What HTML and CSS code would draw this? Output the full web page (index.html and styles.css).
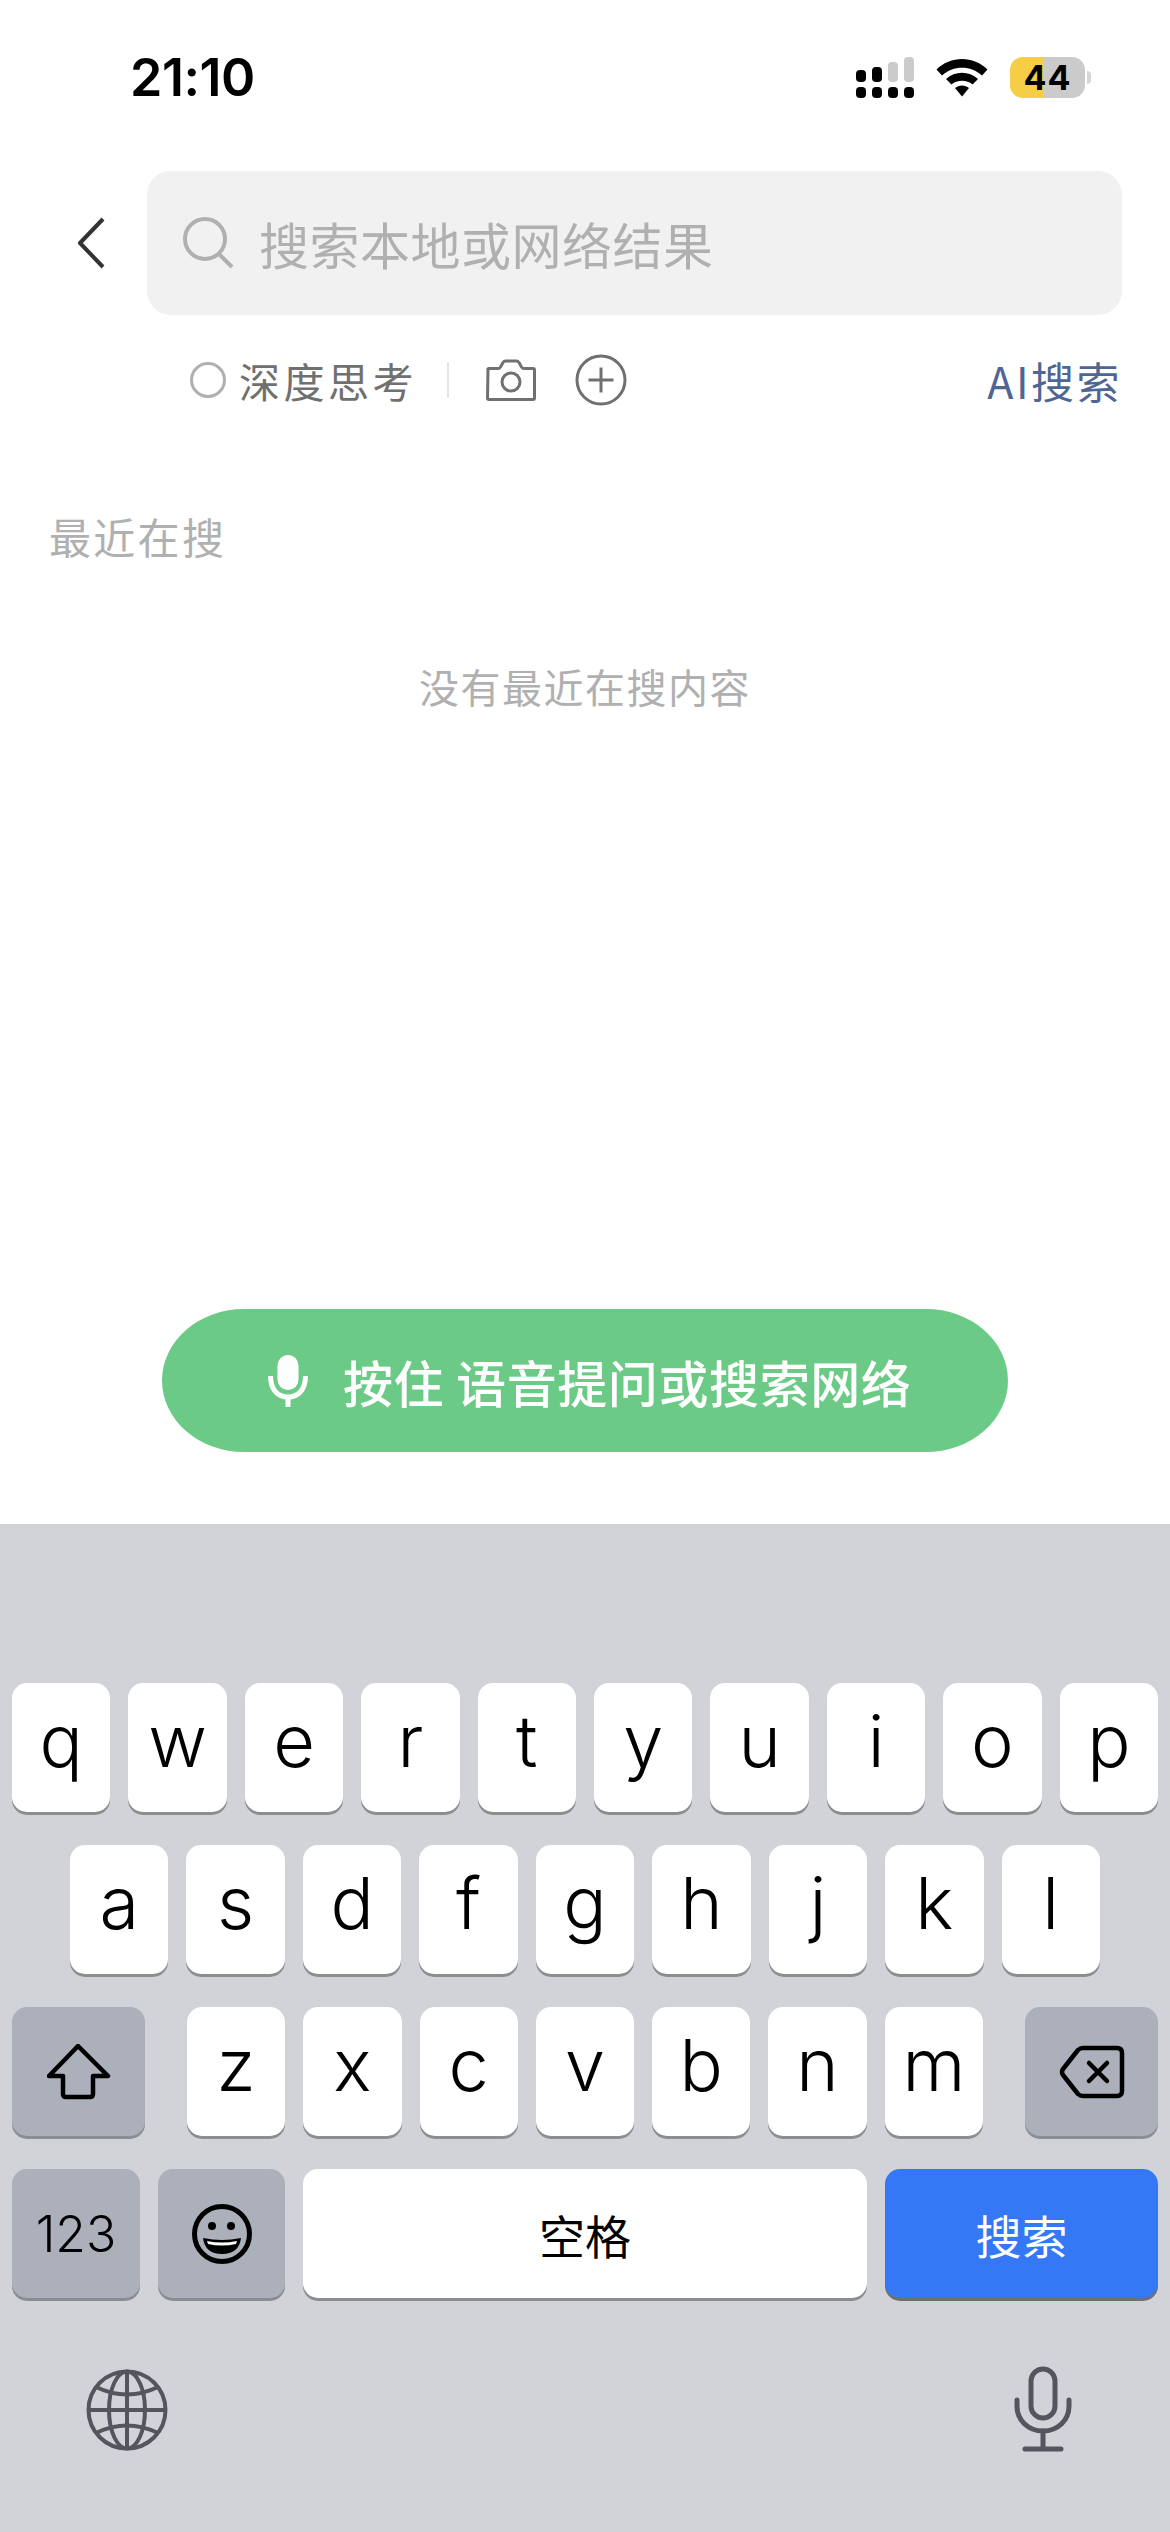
FILE: index.html
```html
<!DOCTYPE html>
<html lang="zh-CN">
<head>
<meta charset="utf-8">
<title>搜索</title>
<link rel="stylesheet" href="styles.css">
</head>
<body>
<div class="page">
  <header class="status">
    <span class="time">21:10</span>
    <div class="status-icons">
      <svg class="signal" width="58" height="42" viewBox="0 0 58 42">
        <rect x="0" y="13" width="10" height="12" rx="4" fill="#000"/>
        <rect x="16" y="10" width="10" height="15" rx="4" fill="#000"/>
        <rect x="32" y="5" width="10" height="20" rx="4" fill="#cbcbcb"/>
        <rect x="48" y="0" width="10" height="25" rx="4" fill="#cbcbcb"/>
        <rect x="0" y="30" width="10" height="11" rx="4" fill="#000"/>
        <rect x="16" y="30" width="10" height="11" rx="4" fill="#000"/>
        <rect x="32" y="30" width="10" height="11" rx="4" fill="#000"/>
        <rect x="48" y="30" width="10" height="11" rx="4" fill="#000"/>
      </svg>
      <svg class="wifi" width="52" height="39" viewBox="0 0 52 39">
        <path d="M0.500 11.500 C14.500 -2.500 37.500 -2.500 51.500 11.500 L46 17.500 C35 7 17 7 6 17.500 Z" fill="#000"/>
        <path d="M10 21 C19 12.500 33 12.500 42 21 L36.500 26.500 C31 21.500 21 21.500 15.500 26.500 Z" fill="#000"/>
        <path d="M19 30 C23 26.500 29 26.500 33 30 L26 38.500 Z" fill="#000"/>
      </svg>
      <div class="battery"><div class="battery-body">44</div><span class="battery-tip"></span></div>
    </div>
  </header>

  <section class="search-row">
    <svg class="back" width="30" height="52" viewBox="0 0 30 52">
      <path d="M27 2 L4 26 L27 50" fill="none" stroke="#333" stroke-width="4" stroke-linejoin="round"/>
    </svg>
    <div class="search-box">
      <svg class="search-icon" width="52" height="52" viewBox="0 0 52 52">
        <circle cx="22" cy="22" r="20" fill="none" stroke="#b0b0b0" stroke-width="4"/>
        <path d="M36 37 L49 50" fill="none" stroke="#b0b0b0" stroke-width="4"/>
      </svg>
      <span class="placeholder">搜索本地或网络结果</span>
    </div>
  </section>

  <section class="tools">
    <span class="radio"></span>
    <span class="tool-label">深度思考</span>
    <span class="divider"></span>
    <svg class="camera" width="52" height="42" viewBox="0 0 52 42">
      <path d="M3 11 Q2.500 9.500 4 9.500 H13 Q14.500 9.500 15.500 8 L18 3.500 Q19 2 20.500 2 H31.500 Q33 2 34 3.500 L36.500 8 Q37.500 9.500 39 9.500 H48 Q49.500 9.500 49.500 11 V39 Q49.500 40.500 48 40.500 H4 Q2.500 40.500 2.500 39 Z" fill="none" stroke="#707070" stroke-width="3" stroke-linejoin="round"/>
      <circle cx="26" cy="23" r="9" fill="none" stroke="#707070" stroke-width="3"/>
    </svg>
    <svg class="plus" width="52" height="52" viewBox="0 0 52 52">
      <circle cx="26" cy="26" r="24" fill="none" stroke="#707070" stroke-width="3"/>
      <path d="M26 13.500 V38.500 M13.500 26 H38.500" fill="none" stroke="#707070" stroke-width="3"/>
    </svg>
    <span class="ai-link">AI搜索</span>
  </section>

  <main class="content">
    <h2 class="recent-title">最近在搜</h2>
    <p class="empty">没有最近在搜内容</p>
    <button class="voice" type="button">
      <svg width="40" height="52" viewBox="0 0 40 52">
        <rect x="9.500" y="0" width="21" height="35" rx="10.500" fill="#fff"/>
        <path d="M2.500 21 C2.500 35 10 42 20 42 C30 42 37.500 35 37.500 21" fill="none" stroke="#fff" stroke-width="5"/>
        <rect x="17.500" y="41" width="5" height="11" fill="#fff"/>
      </svg>
      <span>按住 语音提问或搜索网络</span>
    </button>
  </main>

  <section class="keyboard">
    <div class="kb-row">
      <div class="key">q</div><div class="key">w</div><div class="key">e</div><div class="key">r</div><div class="key">t</div><div class="key">y</div><div class="key">u</div><div class="key">i</div><div class="key">o</div><div class="key">p</div>
    </div>
    <div class="kb-row kb-row-2">
      <div class="key">a</div><div class="key">s</div><div class="key">d</div><div class="key">f</div><div class="key">g</div><div class="key">h</div><div class="key">j</div><div class="key">k</div><div class="key">l</div>
    </div>
    <div class="kb-row kb-row-3">
      <div class="key key-fn key-wide">
        <svg width="64" height="56" viewBox="0 0 64 56">
          <path d="M31 2 L61 32 H46 V50 Q46 53 43 53 H19 Q16 53 16 50 V32 H2 Z" fill="none" stroke="#000" stroke-width="4.500" stroke-linejoin="round"/>
        </svg>
      </div>
      <div class="letters">
        <div class="key">z</div><div class="key">x</div><div class="key">c</div><div class="key">v</div><div class="key">b</div><div class="key">n</div><div class="key">m</div>
      </div>
      <div class="key key-fn key-wide">
        <svg width="66" height="54" viewBox="0 0 66 54">
          <path d="M24 3 H58 Q63 3 63 8 V46 Q63 51 58 51 H24 Q21 51 19 49 L4 30 Q2 27 4 24 L19 5 Q21 3 24 3 Z" fill="none" stroke="#000" stroke-width="4.500" stroke-linejoin="round"/>
          <path d="M30 18 L48 36 M48 18 L30 36" fill="none" stroke="#000" stroke-width="4.500" stroke-linecap="round"/>
        </svg>
      </div>
    </div>
    <div class="kb-row">
      <div class="key key-fn key-num">123</div>
      <div class="key key-fn key-emoji">
        <svg width="60" height="60" viewBox="0 0 60 60">
          <circle cx="30" cy="30" r="27.500" fill="none" stroke="#000" stroke-width="5"/>
          <circle cx="20" cy="22" r="4" fill="#000"/>
          <circle cx="39" cy="22" r="4" fill="#000"/>
          <path d="M11 34 Q30 38 49 34 Q47 50 30 50 Q13 50 11 34 Z" fill="#000"/>
          <path d="M15 37 Q30 40 45 37 L44 40 Q30 43 16 40 Z" fill="#fff"/>
        </svg>
      </div>
      <div class="key key-space">空格</div>
      <div class="key key-go">搜索</div>
    </div>
    <div class="kb-bottom">
      <svg class="globe" width="82" height="82" viewBox="0 0 82 82">
        <g fill="none" stroke="#53565e" stroke-width="4">
          <circle cx="41" cy="41" r="38.500"/>
          <ellipse cx="41" cy="41" rx="18" ry="38.500"/>
          <path d="M41 2.500 V79.500 M2.500 41 H79.500"/>
          <path d="M10 18 Q41 33 72 18 M10 64 Q41 49 72 64"/>
        </g>
      </svg>
      <svg class="kb-mic" width="58" height="86" viewBox="0 0 58 86">
        <g fill="none" stroke="#53565e" stroke-width="5" stroke-linecap="round">
          <rect x="17" y="3" width="24" height="49" rx="12"/>
          <path d="M3 34 V40 C3 54 14 65 29 65 C44 65 55 54 55 40 V34"/>
          <path d="M29 65 V81 M11 83 H47"/>
        </g>
      </svg>
    </div>
  </section>
</div>
</body>
</html>
```
FILE: styles.css
```css
* { box-sizing: border-box; }
html, body { margin: 0; padding: 0; background: #fff; }
body { font-family: "Noto Sans CJK SC", "Noto Sans", sans-serif; }
.page { width: 1170px; height: 2532px; display: flex; flex-direction: column; overflow: hidden; }

.status { height: 171px; flex: none; display: flex; justify-content: space-between; align-items: flex-start; padding: 57px 79px 0 130px; }
.time { font-family: Inter, sans-serif; font-weight: 600; font-size: 52px; line-height: 42px; letter-spacing: -0.500px; color: #000; }
.status-icons { display: flex; align-items: flex-start; }
.wifi { margin: 1px 0 0 22px; }
.battery { margin-left: 22px; display: flex; align-items: center; }
.battery-body { width: 75px; height: 41px; border-radius: 13px; background: linear-gradient(90deg, #f5ce46 0 44%, #cbcbcb 44% 100%); font-family: Inter, sans-serif; font-weight: 700; font-size: 34px; line-height: 41px; letter-spacing: 1px; text-align: center; color: #000; }
.battery-tip { width: 4px; height: 13px; margin-left: 2px; border-radius: 0 7px 7px 0; background: #d6d6d6; }

.search-row { display: flex; align-items: center; height: 144px; flex: none; padding-left: 76px; }
.back { flex: none; margin-right: 41px; }
.search-box { width: 975px; height: 144px; display: flex; align-items: center; padding-left: 36px; background: #f1f1f1; border-radius: 24px; }
.search-icon { flex: none; margin-right: 24px; }
.placeholder { font-size: 50px; font-weight: 400; letter-spacing: 0.500px; line-height: 60px; color: #b0b0b0; }

.tools { height: 66px; margin-top: 32px; flex: none; display: flex; align-items: center; padding: 0 48px 0 190px; }
.radio { width: 36px; height: 36px; border: 3px solid #b0b0b0; border-radius: 50%; margin-right: 13px; }
.tool-label { font-size: 41px; font-weight: 400; letter-spacing: 3.500px; line-height: 50px; color: #707070; }
.divider { width: 2px; height: 36px; background: #e4e4e4; margin: 0 36px 0 30px; }
.camera { flex: none; }
.plus { flex: none; margin-left: 38px; }
.ai-link { margin-left: auto; font-size: 43px; font-weight: 400; letter-spacing: 2.500px; line-height: 50px; color: #4f6594; }

.content { flex: 1; display: flex; flex-direction: column; min-height: 0; }
.recent-title { margin: 0; padding: 95px 0 0 49px; font-size: 42px; font-weight: 400; letter-spacing: 2.300px; line-height: 56px; color: #b0b0b0; }
.empty { margin: 0; padding-top: 94px; text-align: center; font-size: 40px; font-weight: 400; letter-spacing: 1.500px; line-height: 56px; color: #b0b0b0; }
.voice { margin: auto 0 72px 162px; width: 846px; height: 143px; border: 0; border-radius: 82px / 71.500px; background: #6bcb86; display: flex; align-items: center; padding: 0 0 0 106px; font-family: inherit; color: #fff; }
.voice svg { flex: none; margin-right: 35px; }
.voice span { font-size: 50px; font-weight: 500; letter-spacing: 0.600px; line-height: 60px; white-space: nowrap; }

.keyboard { height: 1008px; flex: none; background: #d1d3d9; padding-top: 159px; display: flex; flex-direction: column; }
.kb-row { display: flex; gap: 18px; padding: 0 12px; height: 129px; margin-bottom: 33px; }
.kb-row-2 { padding: 0 70px; }
.kb-row-3 { gap: 42px; }
.letters { display: flex; gap: 18px; flex: 1; }
.key { flex: 1 1 0; min-width: 0; height: 129px; padding-bottom: 13px; display: flex; align-items: center; justify-content: center; background: #fff; border-radius: 15px; box-shadow: 0 3px 0 #8c8d91; font-family: Inter, sans-serif; font-size: 72px; font-weight: 300; line-height: 1; color: #000; }
.key-fn { background: #acb0bb; padding-bottom: 0; }
.key-wide { flex: 0 0 133px; }
.key-num { flex: 0 0 128px; font-size: 50px; font-weight: 300; }
.key-emoji { flex: 0 0 127px; }
.key-space { flex: 0 0 564px; padding-bottom: 0; font-family: "Noto Sans CJK SC", sans-serif; font-size: 46px; font-weight: 400; }
.key-go { flex: 1; padding-bottom: 0; font-family: "Noto Sans CJK SC", sans-serif; font-size: 46px; font-weight: 400; background: #3478f6; color: #fff; box-shadow: 0 3px 0 #6f7073; }
.kb-bottom { display: flex; justify-content: space-between; align-items: flex-start; padding: 38px 98px 0 86px; }
.kb-mic { margin-top: -3px; }
```
